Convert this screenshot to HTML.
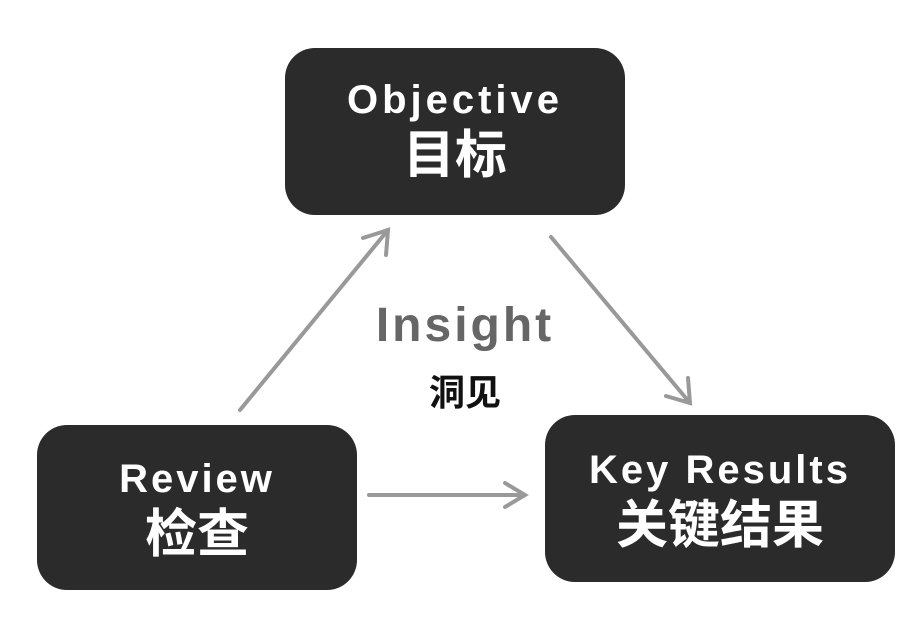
<!DOCTYPE html>
<html><head><meta charset="utf-8"><style>
body{margin:0;width:922px;height:622px;background:#fff;position:relative;overflow:hidden;font-family:"Liberation Sans","Noto Sans CJK SC",sans-serif}
.b{position:absolute;background:#2b2b2b;border-radius:30px;color:#fff;text-align:center;font-weight:bold}
.e{font-family:"Comic Sans MS","Liberation Sans",sans-serif;font-size:40px;line-height:44px;letter-spacing:2px}
.c{font-size:52px;line-height:60px;margin-top:4px}
</style></head><body>
<svg width="922" height="622" style="position:absolute;left:0;top:0">
<g stroke="#999" stroke-width="4" fill="none" stroke-linecap="round">
<path d="M240 410 L388 230 M363 238 L388 230 L386 255"/>
<path d="M551 237 L690 403 M688 378 L690 403 L666 396"/>
<path d="M369 495 L525 495 M505 483 L525 495 L505 507"/>
</g></svg>
<div class="b" style="left:285px;top:48px;width:340px;height:167px"><div class="e" style="margin-top:30px;letter-spacing:4px">Objective</div><div class="c">目标</div></div>
<div class="b" style="left:37px;top:425px;width:320px;height:165px"><div class="e" style="margin-top:32px;letter-spacing:3px">Review</div><div class="c">检查</div></div>
<div class="b" style="left:545px;top:415px;width:350px;height:167px"><div class="e" style="margin-top:33px;letter-spacing:3px">Key Results</div><div class="c">关键结果</div></div>
<div style="position:absolute;left:340px;top:298px;width:250px;text-align:center;color:#666;font-weight:bold;font-family:'Comic Sans MS','Liberation Sans',sans-serif;font-size:48px;line-height:56px;letter-spacing:3px">Insight</div>
<div style="position:absolute;left:360px;top:372px;width:210px;text-align:center;color:#111;font-weight:bold;font-size:36px;line-height:42px">洞见</div>
</body></html>
